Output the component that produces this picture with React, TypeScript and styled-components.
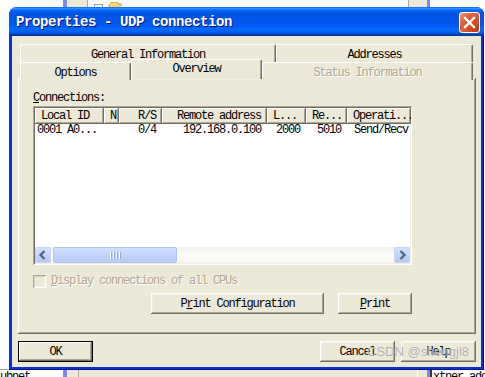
import * as React from 'react';
import styled, { createGlobalStyle } from 'styled-components';

const face = '#ECE9D8';
const shadow = '#ACA899';
const dark = '#716F64';
const light = '#F1EFE2';
const grayText = '#ACA899';

const raised = `box-shadow: inset -1px -1px ${dark}, inset 1px 1px #fff, inset -2px -2px ${shadow}, inset 2px 2px ${light};`;
const sunken = `box-shadow: inset 1px 1px ${shadow}, inset -1px -1px #fff, inset 2px 2px ${dark}, inset -2px -2px ${light};`;

const GlobalStyle = createGlobalStyle`
  html, body { margin: 0; padding: 0; background: #fff; }
  body {
    font-family: "Liberation Mono", "DejaVu Sans Mono", monospace;
    font-size: 12px;
    letter-spacing: -1.2px;
    color: #000;
  }
`;

interface IColumn {
  title: string;
  width: number;
  head: 'left' | 'right';
  cell: 'left' | 'right';
}

const columns: IColumn[] = [
  { title: 'Local ID', width: 69, head: 'left', cell: 'left' },
  { title: 'N', width: 15, head: 'left', cell: 'left' },
  { title: 'R/S', width: 43, head: 'right', cell: 'right' },
  { title: 'Remote address', width: 105, head: 'right', cell: 'right' },
  { title: 'L...', width: 39, head: 'left', cell: 'right' },
  { title: 'Re...', width: 41, head: 'left', cell: 'right' },
  { title: 'Operati...', width: 64, head: 'left', cell: 'left' },
];

const rows = [['0001 A0...', '', '0/4', '192.168.0.100', '2000', '5010', 'Send/Recv']];

export default () => (
  <>
    <GlobalStyle />
    <Desktop>
      <BackApp>
        <SidePane>
          <ColumnCaption>ubnet</ColumnCaption>
        </SidePane>
        <Stripe width={4} />
        <MiddlePane>
          <TreeBox>
            <svg width="34" height="8" viewBox="0 0 34 8">
              <rect x="6.5" y="2.5" width="8" height="8" fill="#fff" stroke="#7F9DB9" />
              <path d="M21 3 L24 0 L29 0 L30 2 L36 2 L36 9 L21 9 Z" fill="#F6D86B" stroke="#C9A227" />
            </svg>
          </TreeBox>
          <BottomBox />
        </MiddlePane>
        <Stripe width={3} />
        <SidePane grow>
          <ColumnCaption bordered>xtner address</ColumnCaption>
        </SidePane>
      </BackApp>

      <Dialog>
        <TitleBar>
          <Title>Properties - UDP connection</Title>
          <CloseButton>
            <svg width="19" height="19" viewBox="0 0 19 19">
              <path d="M5 5 L14 14 M14 5 L5 14" stroke="#fff" strokeWidth="2.4" strokeLinecap="square" />
            </svg>
          </CloseButton>
        </TitleBar>

        <Client>
          <TabRow height={18}>
            <Tab width={256}>General Information</Tab>
            <Tab width={197}>Addresses</Tab>
          </TabRow>
          <TabRow height={16}>
            <Tab width={111}>Options</Tab>
            <Tab width={131} active>Overview</Tab>
            <Tab width={211} disabled>Status Information</Tab>
          </TabRow>

          <Panel>
            <FieldLabel><U>C</U>onnections:</FieldLabel>
            <ListView>
              <HeaderRow>
                {columns.map(col => (
                  <HeaderCell key={col.title} width={col.width} align={col.head}>{col.title}</HeaderCell>
                ))}
              </HeaderRow>
              <Rows>
                {rows.map(row => (
                  <Row key={row[0]}>
                    {row.map((value, i) => (
                      <Cell key={i} width={columns[i].width} align={columns[i].cell} first={i === 0}>{value}</Cell>
                    ))}
                  </Row>
                ))}
              </Rows>
              <HScroll>
                <ScrollArrow>
                  <svg width="16" height="16" viewBox="0 0 16 16">
                    <path d="M9.5 4 L5.5 8 L9.5 12" fill="none" stroke="#4D6185" strokeWidth="2.2" />
                  </svg>
                </ScrollArrow>
                <Thumb>
                  <Grip>{[0, 1, 2, 3].map(i => <GripLine key={i} />)}</Grip>
                </Thumb>
                <ScrollArrow right>
                  <svg width="16" height="16" viewBox="0 0 16 16">
                    <path d="M6.5 4 L10.5 8 L6.5 12" fill="none" stroke="#4D6185" strokeWidth="2.2" />
                  </svg>
                </ScrollArrow>
              </HScroll>
            </ListView>

            <CheckRow>
              <CheckBox />
              <DisabledText><U>D</U>isplay connections of all CPUs</DisabledText>
            </CheckRow>

            <PanelButtons>
              <Button width={173}>P<U>r</U>int Configuration</Button>
              <Button width={74}><U>P</U>rint</Button>
            </PanelButtons>
          </Panel>

          <DialogButtons>
            <Button width={75} isDefault>OK</Button>
            <ButtonGroup>
              <Button width={75}>Cancel</Button>
              <Button width={75}>Help</Button>
            </ButtonGroup>
          </DialogButtons>
        </Client>
      </Dialog>

      <Watermark>CSDN @shengjl8</Watermark>
    </Desktop>
  </>
);

const Desktop = styled.div`
  position: relative;
  width: 485px;
  height: 377px;
  overflow: hidden;
  background: #fff;
`;

const BackApp = styled.div`
  display: flex;
  height: 100%;
`;

const SidePane = styled.div<{ grow?: boolean }>`
  width: 63px;
  flex: ${({ grow }) => (grow ? 1 : 'none')};
  background: #fff;
  display: flex;
  flex-direction: column;
  justify-content: flex-end;
  overflow: hidden;
`;

const ColumnCaption = styled.div<{ bordered?: boolean }>`
  height: 6px;
  padding: 1px 0 0 ${({ bordered }) => (bordered ? 1 : 0)}px;
  border-top: 1px solid ${shadow};
  border-left: ${({ bordered }) => (bordered ? `2px solid #333` : 'none')};
  line-height: 13px;
  white-space: nowrap;
  overflow: hidden;
`;

const Stripe = styled.div<{ width: number }>`
  width: ${({ width }) => width}px;
  background: #7F86EE;
`;

const MiddlePane = styled.div`
  width: 360px;
  background: ${face};
  display: flex;
  flex-direction: column;
  justify-content: space-between;
`;

const TreeBox = styled.div`
  margin-left: 20px;
  width: 320px;
  height: 8px;
  background: #fff;
  border-left: 1px solid ${shadow};
  border-right: 1px solid ${shadow};
  overflow: hidden;
`;

const BottomBox = styled.div`
  margin-left: 11px;
  width: 338px;
  height: 7px;
  background: ${face};
  border-top: 1px solid ${shadow};
  border-left: 1px solid ${shadow};
  border-right: 1px solid #fff;
`;

const Dialog = styled.div`
  position: absolute;
  left: 9px;
  top: 7px;
  width: 475px;
  height: 363px;
  display: flex;
  flex-direction: column;
  background: #0831D9;
  border-radius: 8px 8px 0 0;
  box-shadow: inset -1px -1px #00138C;
  overflow: hidden;
`;

const TitleBar = styled.div`
  height: 29px;
  flex: none;
  display: flex;
  align-items: center;
  justify-content: space-between;
  padding: 0 4px 0 7px;
  background: linear-gradient(180deg, #0058EE 0%, #3593FF 4%, #288EFF 6%, #127DFF 8%, #036FFC 10%, #0262EE 14%, #0057E5 20%, #0054E3 24%, #0055EB 56%, #005BF5 66%, #026AFE 76%, #0062EF 86%, #0052D6 92%, #0040AB 94%, #003092 100%);
`;

const Title = styled.span`
  font-family: "Liberation Mono", "DejaVu Sans Mono", monospace;
  font-weight: bold;
  font-size: 14px;
  letter-spacing: -0.4px;
  color: #fff;
  text-shadow: 1px 1px #0F1089;
  margin-top: 1px;
`;

const CloseButton = styled.div`
  width: 19px;
  height: 19px;
  margin-top: 2px;
  border: 1px solid #fff;
  border-radius: 3px;
  background: radial-gradient(circle at 85% 85%, #C13C12 0%, #D9532A 45%, #E26B44 75%, #F3A78C 100%);
  display: flex;
`;

const Client = styled.div`
  flex: 1;
  margin: 0 3px 3px 3px;
  padding: 8px 5px 0 6px;
  background: ${face};
  display: flex;
  flex-direction: column;
`;

const TabRow = styled.div<{ height: number }>`
  height: ${({ height }) => height}px;
  padding: 0 3px 0 2px;
  display: flex;
  align-items: flex-end;
`;

const Tab = styled.div<{ width: number; active?: boolean; disabled?: boolean }>`
  position: relative;
  z-index: ${({ active }) => (active ? 2 : 1)};
  box-sizing: border-box;
  width: ${({ width }) => width}px;
  height: ${({ active }) => (active ? 20 : 18)}px;
  margin-bottom: ${({ active }) => (active ? -1 : 0)}px;
  align-self: ${({ active }) => (active ? 'flex-end' : 'stretch')};
  background: ${face};
  border-top: 1px solid #fff;
  border-left: 1px solid #fff;
  border-right: 1px solid ${dark};
  border-radius: 2px 2px 0 0;
  box-shadow: inset -1px 0 ${shadow};
  display: flex;
  align-items: center;
  justify-content: center;
  padding-top: ${({ active }) => (active ? 0 : 2)}px;
  padding-bottom: ${({ active }) => (active ? 2 : 0)}px;
  color: ${({ disabled }) => (disabled ? grayText : '#000')};
  text-shadow: ${({ disabled }) => (disabled ? '1px 1px #fff' : 'none')};
  white-space: nowrap;
`;

const Panel = styled.div`
  height: 256px;
  flex: none;
  box-sizing: border-box;
  padding: 14px 0 0 15px;
  background: ${face};
  ${raised}
`;

const FieldLabel = styled.div`
  line-height: 13px;
  height: 13px;
`;

const U = styled.span`
  text-decoration: underline;
  text-underline-offset: 1px;
`;

const ListView = styled.div`
  margin-top: 1px;
  width: 379px;
  height: 159px;
  box-sizing: border-box;
  padding: 2px;
  background: #fff;
  display: flex;
  flex-direction: column;
  ${sunken}
`;

const HeaderRow = styled.div`
  display: flex;
  height: 16px;
  flex: none;
`;

const HeaderCell = styled.div<{ width: number; align: 'left' | 'right' }>`
  width: ${({ width }) => width}px;
  flex: none;
  box-sizing: border-box;
  padding: 1px ${({ align }) => (align === 'right' ? 6 : 0)}px 0 ${({ align }) => (align === 'left' ? 6 : 0)}px;
  background: ${face};
  line-height: 15px;
  text-align: ${({ align }) => align};
  white-space: nowrap;
  overflow: hidden;
  box-shadow: inset -1px -1px ${dark}, inset 1px 1px #fff, inset -2px -2px ${shadow};
`;

const Rows = styled.div`
  flex: 1;
`;

const Row = styled.div`
  display: flex;
  height: 13px;
`;

const Cell = styled.div<{ width: number; align: 'left' | 'right'; first: boolean }>`
  width: ${({ width }) => width}px;
  flex: none;
  box-sizing: border-box;
  padding: 0 ${({ align }) => (align === 'right' ? 6 : 0)}px 0 ${({ align, first }) => (align === 'left' ? (first ? 2 : 7) : 0)}px;
  line-height: 13px;
  text-align: ${({ align }) => align};
  white-space: nowrap;
  overflow: hidden;
`;

const HScroll = styled.div`
  height: 16px;
  flex: none;
  display: flex;
  align-items: center;
  background: linear-gradient(180deg, #F3F1EC 0%, #FEFEFB 50%, #F7F6F1 100%);
`;

const ScrollArrow = styled.div<{ right?: boolean }>`
  width: 16px;
  height: 16px;
  box-sizing: border-box;
  margin-left: ${({ right }) => (right ? 'auto' : '0')};
  border: 1px solid #C6D5F8;
  border-radius: 2px;
  background: linear-gradient(180deg, #D6E2FD 0%, #C4D4FB 50%, #B4C6F3 100%);
  display: flex;
  svg { margin: -1px; }
`;

const Thumb = styled.div`
  width: 124px;
  height: 16px;
  margin-left: 2px;
  box-sizing: border-box;
  border: 1px solid #AFC4F2;
  border-radius: 2px;
  background: linear-gradient(180deg, #D2DFFD 0%, #C3D4FC 50%, #B8CBF6 100%);
  display: flex;
  align-items: center;
  justify-content: center;
`;

const Grip = styled.div`
  display: flex;
  gap: 1px;
`;

const GripLine = styled.div`
  width: 1px;
  height: 7px;
  background: #fff;
  box-shadow: 1px 0 #8CA8E8;
  margin-right: 1px;
`;

const CheckRow = styled.div`
  margin-top: 10px;
  height: 13px;
  display: flex;
  align-items: center;
  gap: 5px;
`;

const CheckBox = styled.div`
  width: 13px;
  height: 13px;
  background: ${face};
  box-shadow: inset 1px 1px ${shadow}, inset -1px -1px #fff, inset 2px 2px #D6D3C5, inset -2px -2px ${light};
`;

const DisabledText = styled.span`
  color: ${grayText};
  text-shadow: 1px 1px #fff;
  line-height: 13px;
`;

const PanelButtons = styled.div`
  margin-top: 5px;
  width: 379px;
  display: flex;
  justify-content: flex-end;
  gap: 14px;
`;

const Button = styled.div<{ width: number; isDefault?: boolean }>`
  width: ${({ width }) => width}px;
  height: 21px;
  box-sizing: border-box;
  background: ${face};
  display: flex;
  align-items: center;
  justify-content: center;
  white-space: nowrap;
  ${({ isDefault }) =>
    isDefault
      ? `border: 1px solid #000; box-shadow: inset -1px -1px ${dark}, inset 1px 1px #fff, inset -2px -2px ${shadow};`
      : raised}
`;

const DialogButtons = styled.div`
  margin-top: 7px;
  display: flex;
  justify-content: space-between;
`;

const ButtonGroup = styled.div`
  display: flex;
  gap: 6px;
`;

const Watermark = styled.div`
  position: absolute;
  left: 367px;
  top: 344px;
  font-family: "Liberation Sans", Arial, sans-serif;
  font-size: 13px;
  letter-spacing: 0;
  color: rgba(150, 150, 150, 0.75);
  text-shadow: 0 0 1px rgba(255, 255, 255, 0.9);
  pointer-events: none;
`;
